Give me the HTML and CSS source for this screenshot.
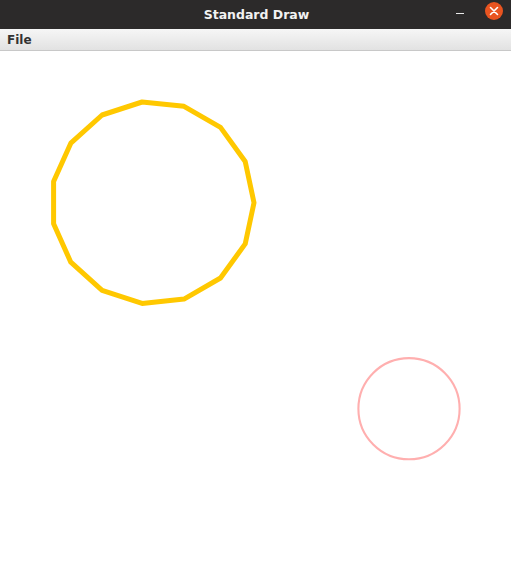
FILE: index.html
```html
<!DOCTYPE html>
<html>
<head>
<meta charset="utf-8">
<link rel="stylesheet" href="styles.css">
</head>
<body>
<div class="window">
  <header class="titlebar">
    <span class="title">Standard Draw</span>
    <div class="controls">
      <span class="minimize"></span>
      <span class="close">
        <svg width="18" height="18" viewBox="0 0 18 18"><path d="M5.5 5.5 L12.5 12.5 M12.5 5.5 L5.5 12.5" stroke="#fff" stroke-width="1.6" stroke-linecap="round"/></svg>
      </span>
    </div>
  </header>
  <nav class="menubar"><span class="menu-item">File</span></nav>
  <main class="canvas">
    <svg class="drawing" width="511" height="510" viewBox="0 51 511 510">
      <polygon class="poly" points="254.0,202.7 245.2,243.9 220.5,278.0 184.0,299.1 142.1,303.4 102.1,290.4 70.8,262.2 53.6,223.8 53.6,181.6 70.8,143.2 102.1,115.0 142.1,102.0 184.0,106.3 220.5,127.4 245.2,161.5"/>
      <circle class="ring" cx="409" cy="408.7" r="50.6"/>
    </svg>
  </main>
</div>
</body>
</html>
```
FILE: styles.css
```css
html, body {
  margin: 0;
  padding: 0;
  background: #ffffff;
}
.window {
  width: 511px;
  height: 561px;
  display: flex;
  flex-direction: column;
  overflow: hidden;
}
.titlebar {
  height: 29px;
  flex: none;
  background: #2c2a2a;
  display: flex;
  align-items: center;
  justify-content: center;
  position: relative;
}
.title {
  color: #f2f2f2;
  font-family: "DejaVu Sans", sans-serif;
  font-weight: bold;
  font-size: 12.5px;
  padding-left: 2px;
}
.controls {
  position: absolute;
  right: 8px;
  top: 2px;
  display: flex;
  align-items: center;
  gap: 21px;
}
.minimize {
  width: 8px;
  height: 1px;
  background: #e8e8e8;
  margin-top: 4px;
}
.close {
  width: 18px;
  height: 18px;
  border-radius: 50%;
  background: #e95420;
  display: flex;
}
.menubar {
  height: 21px;
  flex: none;
  background: linear-gradient(#f6f6f6, #e2e2e2);
  border-bottom: 1px solid #c8c8c8;
  display: flex;
  align-items: center;
  padding-left: 7px;
}
.menu-item {
  font-family: "DejaVu Sans", sans-serif;
  font-weight: bold;
  font-size: 12px;
  color: #333333;
}
.canvas {
  flex: 1;
  background: #ffffff;
}
.drawing {
  display: block;
}
.poly {
  fill: none;
  stroke: #ffc800;
  stroke-width: 5;
  stroke-linejoin: round;
}
.ring {
  fill: none;
  stroke: #ffafaf;
  stroke-width: 2.1;
}
```
